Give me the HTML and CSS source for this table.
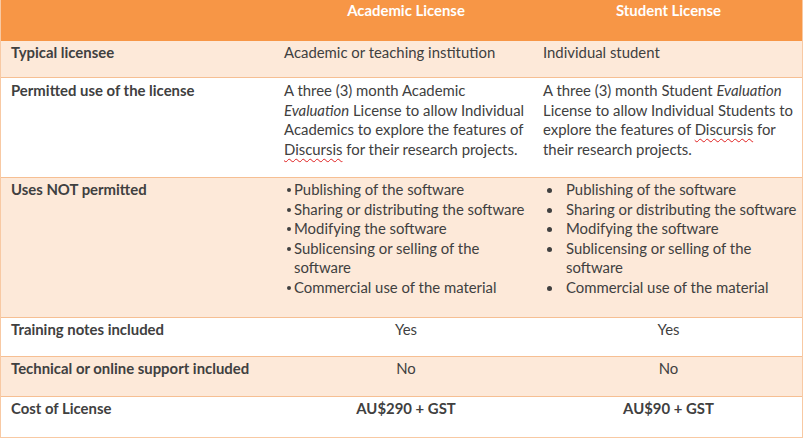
FILE: index.html
```html
<!DOCTYPE html>
<html lang="en">
<head>
<meta charset="utf-8">
<title>License comparison</title>
<link rel="stylesheet" href="styles.css">
</head>
<body>
<div class="table">
  <div class="row head">
    <div class="cell"></div>
    <div class="cell center">Academic License</div>
    <div class="cell center">Student License</div>
  </div>
  <div class="row tint r1">
    <div class="cell label">Typical licensee</div>
    <div class="cell">Academic or teaching institution</div>
    <div class="cell">Individual student</div>
  </div>
  <div class="row r2">
    <div class="cell label">Permitted use of the license</div>
    <div class="cell">A three (3) month Academic <em>Evaluation</em> License to allow Individual Academics to explore the features of <span class="spell">Discursis</span> for their research projects.</div>
    <div class="cell">A three (3) month Student <em>Evaluation</em> License to allow Individual Students to explore the features of <span class="spell">Discursis</span> for their research projects.</div>
  </div>
  <div class="row tint r3">
    <div class="cell label">Uses NOT permitted</div>
    <div class="cell">
      <ul class="list tight">
        <li>Publishing of the software</li>
        <li>Sharing or distributing the software</li>
        <li>Modifying the software</li>
        <li>Sublicensing or selling of the software</li>
        <li>Commercial use of the material</li>
      </ul>
    </div>
    <div class="cell">
      <ul class="list wide">
        <li>Publishing of the software</li>
        <li>Sharing or distributing the software</li>
        <li>Modifying the software</li>
        <li>Sublicensing or selling of the software</li>
        <li>Commercial use of the material</li>
      </ul>
    </div>
  </div>
  <div class="row r4">
    <div class="cell label">Training notes included</div>
    <div class="cell center">Yes</div>
    <div class="cell center">Yes</div>
  </div>
  <div class="row tint r5">
    <div class="cell label">Technical or online support included</div>
    <div class="cell center">No</div>
    <div class="cell center">No</div>
  </div>
  <div class="row r6">
    <div class="cell label">Cost of License</div>
    <div class="cell center bold">AU$290 + GST</div>
    <div class="cell center bold">AU$90 + GST</div>
  </div>
</div>
</body>
</html>
```

FILE: styles.css
```css
html, body {
  margin: 0;
  padding: 0;
  background: #ffffff;
}

body {
  font-family: Lato, "Open Sans", "Liberation Sans", sans-serif;
  font-size: 14.9px;
  line-height: 19.5px;
  color: #404040;
}

.table {
  width: 803px;
  border-left: 1px solid #f8c9a3;
  border-right: 1px solid #f8c9a3;
  border-bottom: 1px solid #f8c9a3;
  box-sizing: border-box;
}

.row {
  display: grid;
  grid-template-columns: 276px 258px 267px;
  border-bottom: 1px solid #f6bf93;
  box-sizing: border-box;
}

.row:last-child {
  border-bottom: none;
}

.head {
  background: #f79646;
  color: #ffffff;
  font-weight: 700;
  height: 41px;
  border-bottom: none;
}

.tint {
  background: #fde9d9;
}

.r1 { height: 37px; }
.r2 { height: 100px; }
.r3 { height: 140px; }
.r4 { height: 39px; }
.r5 { height: 40px; }
.r6 { height: 40px; }

.cell {
  padding: 2px 4px 0 10px;
}

.head .cell {
  padding-top: 1px;
}

.r2 .cell {
  padding-top: 3px;
}

.row .cell:nth-child(2) {
  padding-left: 7px;
}

.row .cell:nth-child(3) {
  padding-left: 8px;
}

.center {
  text-align: center;
}

.row .cell.center {
  padding-left: 0;
  padding-right: 0;
}

.label,
.bold {
  font-weight: 700;
}

em {
  font-style: italic;
}

.spell {
  text-decoration: underline wavy #e02020;
  text-decoration-thickness: 1px;
  text-underline-offset: 3px;
}

.list {
  list-style: none;
  margin: 0;
  padding: 0;
}

.list li {
  position: relative;
}

.tight li {
  padding-left: 10px;
}

.tight li::before {
  content: "";
  position: absolute;
  left: 3px;
  top: 8px;
  width: 4px;
  height: 4px;
  border-radius: 50%;
  background: #404040;
}

.wide li {
  padding-left: 23px;
}

.wide li::before {
  content: "";
  position: absolute;
  left: 4px;
  top: 8px;
  width: 5px;
  height: 5px;
  border-radius: 50%;
  background: #404040;
}
```
